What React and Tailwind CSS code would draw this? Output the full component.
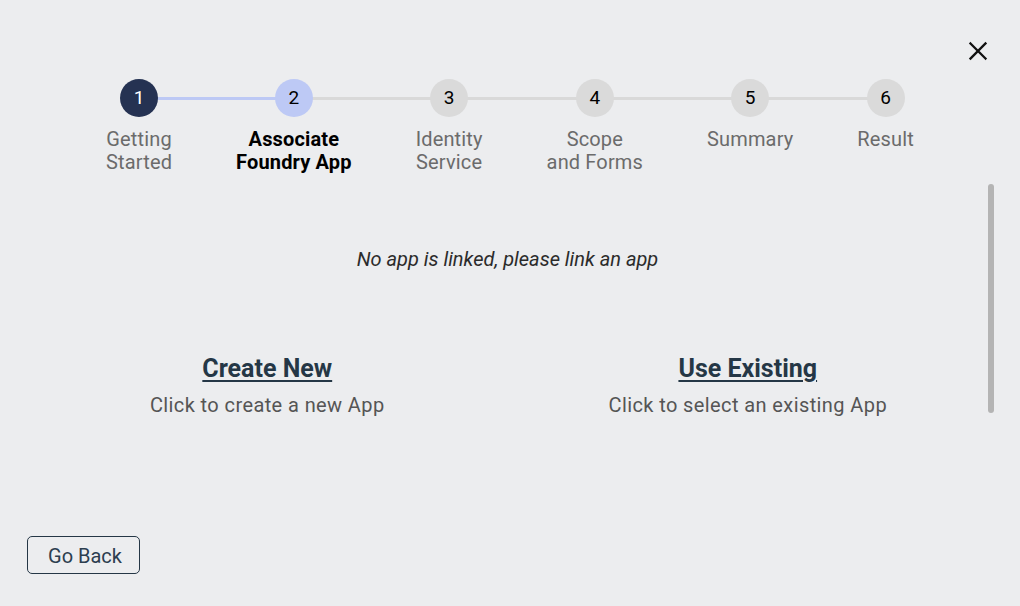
import React from 'react';
import { useLayoutEffect, useRef, useState } from 'react';

const steps = [
    { n: 1, label: ['Getting', 'Started'] },
    { n: 2, label: ['Associate', 'Foundry App'] },
    { n: 3, label: ['Identity', 'Service'] },
    { n: 4, label: ['Scope', 'and Forms'] },
    { n: 5, label: ['Summary'] },
    { n: 6, label: ['Result'] },
];

const current = 2;

const Stepper = () => {
    const wrapRef = useRef(null);
    const circleRefs = useRef([]);
    const [lines, setLines] = useState([]);

    //Measure circle centers so the connectors sit between them
    useLayoutEffect(() => {
        const box = wrapRef.current.getBoundingClientRect();
        const centers = circleRefs.current.map(el => {
            const r = el.getBoundingClientRect();
            return { x: r.left - box.left + r.width / 2, y: r.top - box.top + r.height / 2 };
        });
        const segs = [];
        for (let i = 0; i < centers.length - 1; i++) {
            segs.push({ left: centers[i].x, width: centers[i + 1].x - centers[i].x, top: centers[i].y - 1.5, done: i + 1 < current });
        }
        setLines(segs);
    }, []);

    return (
        <div ref={wrapRef} className="relative flex justify-center gap-16">
            {lines.map((l, i) => (
                <div
                    key={i}
                    className={`absolute h-[3px] ${l.done ? 'bg-[#bdc9f5]' : 'bg-[#d9d9d9]'}`}
                    style={{ left: l.left, width: l.width, top: l.top }}
                />
            ))}
            {steps.map(step => {
                const active = step.n === current;
                const done = step.n < current;
                return (
                    <div key={step.n} className="relative flex flex-col items-center">
                        <div
                            ref={el => (circleRefs.current[step.n - 1] = el)}
                            className={`w-[38px] h-[38px] rounded-full flex items-center justify-center text-[19px] ${
                                done ? 'bg-[#253252] text-white' : active ? 'bg-[#bdc9f5] text-black' : 'bg-[#dadada] text-black'
                            }`}
                        >
                            {step.n}
                        </div>
                        <div className={`mt-[11px] text-center text-[20px] leading-[23px] tracking-[0.15px] ${active ? 'font-bold text-black' : 'text-[#6b6b6b]'}`}>
                            {step.label.map(t => (
                                <div key={t} className="whitespace-nowrap">{t}</div>
                            ))}
                        </div>
                    </div>
                );
            })}
        </div>
    );
};

const App = () => {
    return (
        <div className="w-[1020px] h-[606px] bg-[#ecedef] flex flex-col font-['Roboto',sans-serif] overflow-hidden">

            {/* Close button */}
            <div className="flex justify-end pt-[41px] pr-[32px]">
                <button className="w-[20px] h-[20px] flex items-center justify-center">
                    <svg width="20" height="20" viewBox="0 0 20 20" fill="none" stroke="#111" strokeWidth="2.3" strokeLinecap="square">
                        <path d="M2.5 2.5 L17.5 17.5 M17.5 2.5 L2.5 17.5" />
                    </svg>
                </button>
            </div>

            {/* Stepper */}
            <div className="mt-[18px]">
                <Stepper />
            </div>

            {/* Body */}
            <div className="mt-[10px] flex pl-[27px] pr-[26px]">
                <div className="flex-1 flex flex-col pt-[63px]">
                    <p className="text-center italic text-[20px] leading-[24px] text-[#2b2b2b]">
                        No app is linked, please link an app
                    </p>
                    <div className="mt-[84px] grid grid-cols-2">
                        <div className="flex flex-col items-center">
                            <a className="text-[25px] leading-[28px] font-bold text-[#253746] underline decoration-2 underline-offset-[3px] cursor-pointer">Create New</a>
                            <span className="mt-[10px] text-[20px] leading-[24px] tracking-[0.4px] text-[#555]">Click to create a new App</span>
                        </div>
                        <div className="flex flex-col items-center">
                            <a className="text-[25px] leading-[28px] font-bold text-[#253746] underline decoration-2 underline-offset-[3px] cursor-pointer">Use Existing</a>
                            <span className="mt-[10px] text-[20px] leading-[24px] tracking-[0.4px] text-[#555]">Click to select an existing App</span>
                        </div>
                    </div>
                </div>
                {/* Scrollbar thumb */}
                <div className="w-[6px] h-[229px] rounded-full bg-[#b4b4b4]" />
            </div>

            {/* Footer */}
            <div className="mt-auto pl-[27px] pb-[32px]">
                <button className="h-[38px] w-[113px] border border-[#253746] rounded-[5px] text-[20px] leading-[24px] text-[#2c3e50] pl-[3px] pt-[2px]">
                    Go Back
                </button>
            </div>
        </div>
    );
};

export default App;
